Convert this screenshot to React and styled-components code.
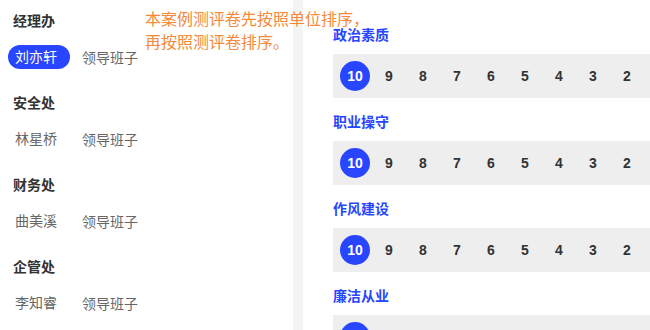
import React from 'react'
import styled, { createGlobalStyle } from 'styled-components'

const GlobalStyle = createGlobalStyle`
	html, body {
		margin: 0;
		padding: 0;
		background: #fff;
	}
	body {
		font-family: "Liberation Sans", "Noto Sans CJK SC", sans-serif;
	}
`

const groups = [
	{ unit: '经理办', name: '刘亦轩', role: '领导班子', active: true },
	{ unit: '安全处', name: '林星桥', role: '领导班子' },
	{ unit: '财务处', name: '曲美溪', role: '领导班子' },
	{ unit: '企管处', name: '李知睿', role: '领导班子' },
]

const items = ['政治素质', '职业操守', '作风建设', '廉洁从业']
const scores = [10, 9, 8, 7, 6, 5, 4, 3, 2]

const App = () => (
	<>
		<GlobalStyle />
		<Page>
			<Sidebar>
				{groups.map(g => (
					<Group key={g.unit}>
						<UnitTitle>{g.unit}</UnitTitle>
						<PersonRow>
							<Name $active={g.active}>{g.name}</Name>
							<Role>{g.role}</Role>
						</PersonRow>
					</Group>
				))}
			</Sidebar>
			<Divider />
			<Main>
				{items.map(item => (
					<div key={item}>
						<ItemTitle>{item}</ItemTitle>
						<ScoreBar>
							{scores.map(s => (
								<Score key={s} $selected={s === 10}>
									{s}
								</Score>
							))}
						</ScoreBar>
					</div>
				))}
			</Main>
			<Note>
				本案例测评卷先按照单位排序，
				<br />
				再按照测评卷排序。
			</Note>
		</Page>
	</>
)

const Page = styled.div`
	position: relative;
	display: flex;
	width: 650px;
	height: 330px;
	overflow: hidden;
`

const Sidebar = styled.div`
	width: 293px;
	flex-shrink: 0;
	padding-top: 11px;
	box-sizing: border-box;
`

const Group = styled.div`
	margin-bottom: 24px;
`

const UnitTitle = styled.div`
	padding-left: 13px;
	height: 20px;
	line-height: 20px;
	font-size: 14px;
	font-weight: bold;
	color: #333;
	margin-bottom: 14px;
`

const PersonRow = styled.div`
	display: flex;
	align-items: center;
	padding-left: 8px;
	height: 24px;
`

const Name = styled.div`
	width: 62px;
	height: 24px;
	line-height: 24px;
	padding: 0 7px;
	box-sizing: border-box;
	border-radius: 12px;
	font-size: 14px;
	color: ${p => (p.$active ? '#fff' : '#666')};
	background: ${p => (p.$active ? '#2845ff' : 'transparent')};
`

const Role = styled.div`
	margin-left: 12px;
	font-size: 14px;
	color: #666;
`

const Divider = styled.div`
	width: 10px;
	flex-shrink: 0;
	background: #f4f4f4;
`

const Main = styled.div`
	flex: 1;
	padding: 25px 0 0 30px;
	min-width: 0;
`

const ItemTitle = styled.div`
	height: 20px;
	line-height: 20px;
	font-size: 14px;
	font-weight: bold;
	color: #2845ff;
	margin-bottom: 9px;
`

const ScoreBar = styled.div`
	display: flex;
	align-items: center;
	gap: 4px;
	height: 44px;
	padding-left: 7px;
	margin-bottom: 14px;
	background: #eeeeee;
`

const Score = styled.div`
	width: 30px;
	height: 30px;
	flex-shrink: 0;
	border-radius: 50%;
	display: flex;
	align-items: center;
	justify-content: center;
	font-size: 14px;
	font-weight: bold;
	color: ${p => (p.$selected ? '#fff' : '#333')};
	background: ${p => (p.$selected ? '#2845ff' : 'transparent')};
`

const Note = styled.div`
	position: absolute;
	left: 145px;
	top: 8px;
	font-size: 16px;
	line-height: 23px;
	color: #f5893a;
`

export default App
